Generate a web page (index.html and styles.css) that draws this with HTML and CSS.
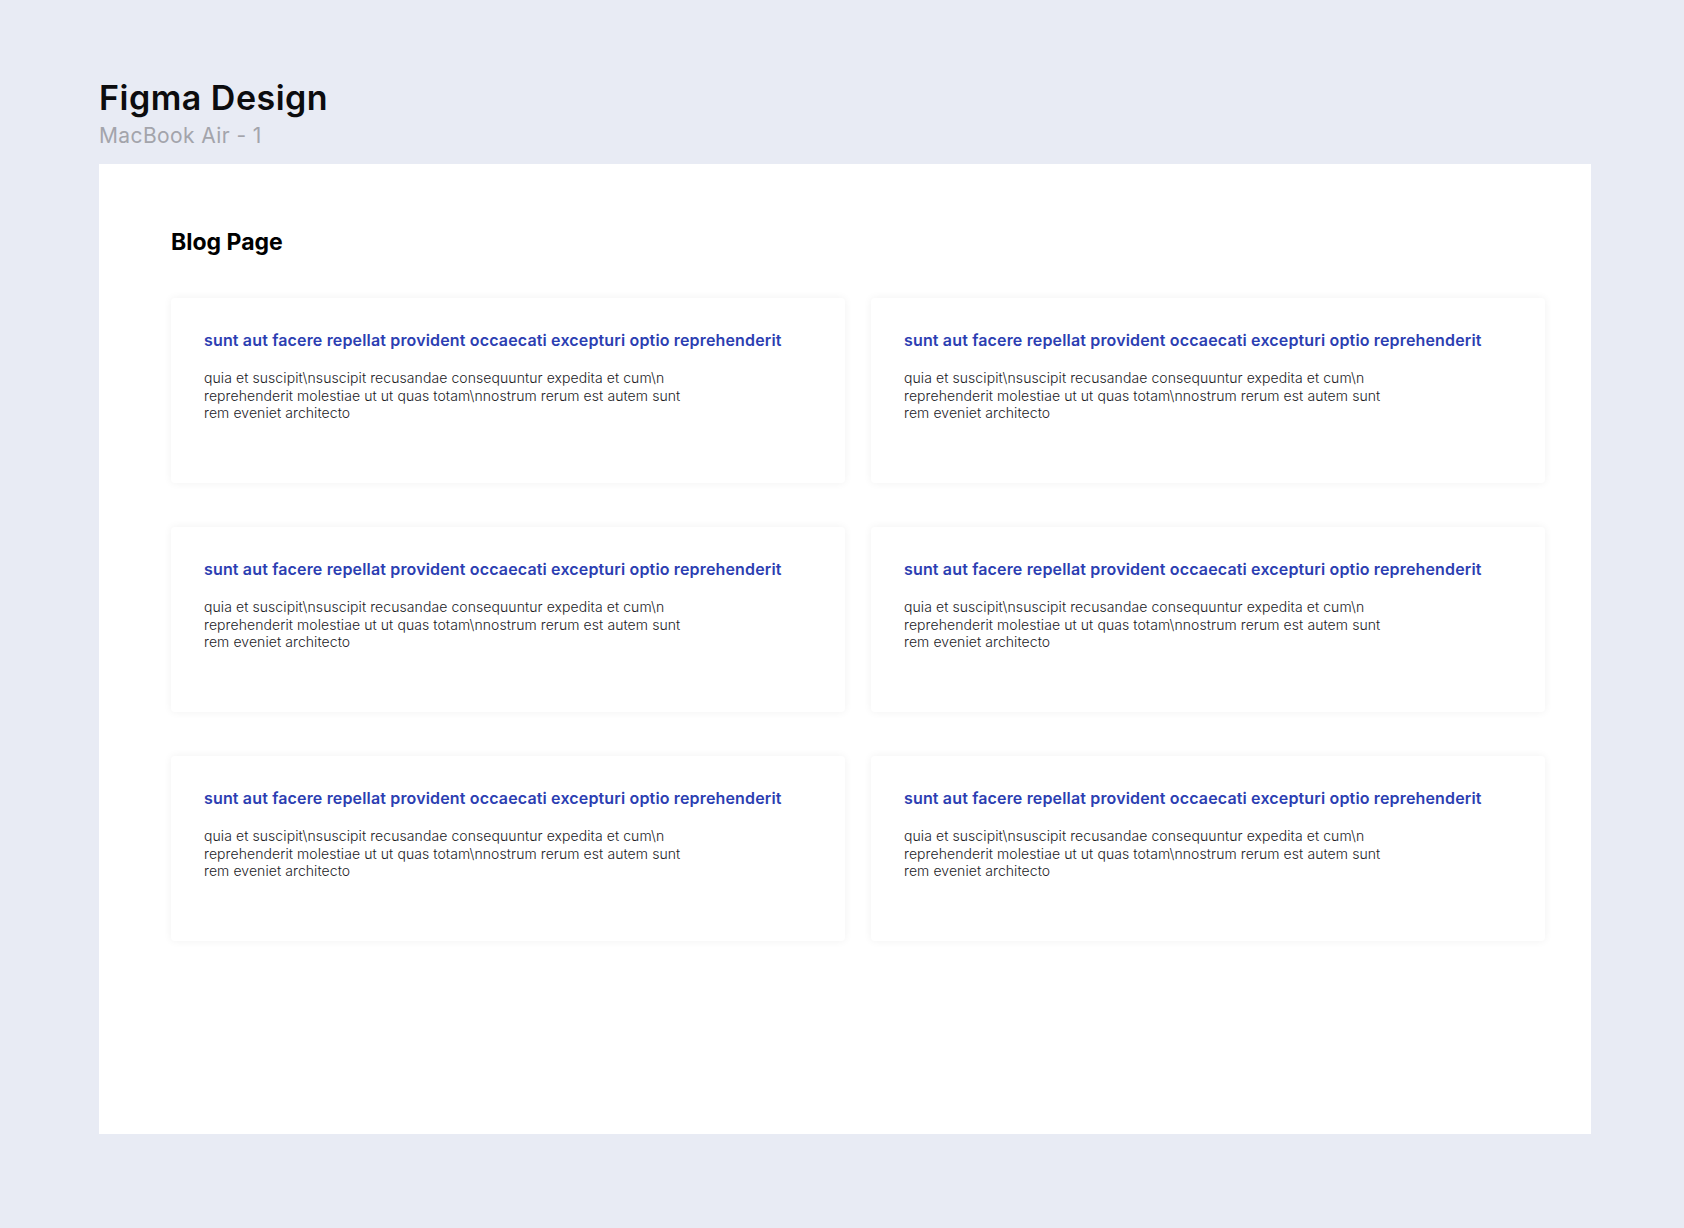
FILE: index.html
```html
<!DOCTYPE html>
<html lang="en">

<head>
    <meta charset="UTF-8">
    <meta name="viewport" content="width=device-width, initial-scale=1.0">
    <title>Figma Design</title>
    <link rel="stylesheet" href="styles.css">
</head>

<body>
    <div class="header">
        <h1>Figma Design</h1>
        <div class="subtitle">MacBook Air - 1</div>
    </div>

    <div class="frame">
        <h2>Blog Page</h2>
        <div class="posts">
            <div class="post">
                <h3>sunt aut facere repellat provident occaecati excepturi optio reprehenderit</h3>
                <p>quia et suscipit\nsuscipit recusandae consequuntur expedita et cum\n<br>reprehenderit molestiae ut ut quas totam\nnostrum rerum est autem sunt<br>rem eveniet architecto</p>
            </div>
            <div class="post">
                <h3>sunt aut facere repellat provident occaecati excepturi optio reprehenderit</h3>
                <p>quia et suscipit\nsuscipit recusandae consequuntur expedita et cum\n<br>reprehenderit molestiae ut ut quas totam\nnostrum rerum est autem sunt<br>rem eveniet architecto</p>
            </div>
            <div class="post">
                <h3>sunt aut facere repellat provident occaecati excepturi optio reprehenderit</h3>
                <p>quia et suscipit\nsuscipit recusandae consequuntur expedita et cum\n<br>reprehenderit molestiae ut ut quas totam\nnostrum rerum est autem sunt<br>rem eveniet architecto</p>
            </div>
            <div class="post">
                <h3>sunt aut facere repellat provident occaecati excepturi optio reprehenderit</h3>
                <p>quia et suscipit\nsuscipit recusandae consequuntur expedita et cum\n<br>reprehenderit molestiae ut ut quas totam\nnostrum rerum est autem sunt<br>rem eveniet architecto</p>
            </div>
            <div class="post">
                <h3>sunt aut facere repellat provident occaecati excepturi optio reprehenderit</h3>
                <p>quia et suscipit\nsuscipit recusandae consequuntur expedita et cum\n<br>reprehenderit molestiae ut ut quas totam\nnostrum rerum est autem sunt<br>rem eveniet architecto</p>
            </div>
            <div class="post">
                <h3>sunt aut facere repellat provident occaecati excepturi optio reprehenderit</h3>
                <p>quia et suscipit\nsuscipit recusandae consequuntur expedita et cum\n<br>reprehenderit molestiae ut ut quas totam\nnostrum rerum est autem sunt<br>rem eveniet architecto</p>
            </div>
        </div>
    </div>
</body>

</html>
```

FILE: styles.css
```css
body {
    font-family: Inter, "Noto Sans", sans-serif;
    margin: 0;
    padding: 78px 0 0 99px;
    background-color: #e8ebf4;
    min-height: 1150px;
}

.header {
    margin-bottom: 16px;
}

.header h1 {
    margin: 0;
    font-size: 34px;
    line-height: 40px;
    font-weight: 600;
    letter-spacing: 0.5px;
    color: #0c0c0e;
}

.subtitle {
    margin-top: 6px;
    font-size: 21px;
    line-height: 24px;
    letter-spacing: 0.4px;
    color: #a3a4ab;
}

.frame {
    width: 1492px;
    height: 970px;
    box-sizing: border-box;
    padding: 65px 0 0 72px;
    background-color: #fff;
}

.frame h2 {
    margin: 0 0 42px;
    font-size: 23px;
    line-height: 27px;
    font-weight: 700;
    color: #000;
}

.posts {
    display: grid;
    grid-template-columns: 674px 674px;
    grid-auto-rows: 185px;
    column-gap: 26px;
    row-gap: 44px;
}

.post {
    box-sizing: border-box;
    padding: 32px 33px 30px;
    background-color: #fff;
    border-radius: 4px;
    box-shadow: 0 0 8px rgba(0, 0, 0, 0.06);
}

.post h3 {
    margin: 0 0 19px;
    font-size: 16px;
    line-height: 20px;
    font-weight: 600;
    letter-spacing: 0.16px;
    color: #2c3eb2;
}

.post p {
    margin: 0;
    font-size: 14px;
    line-height: 17.5px;
    font-weight: 300;
    letter-spacing: 0.08px;
    color: #1c1c1f;
}
```
